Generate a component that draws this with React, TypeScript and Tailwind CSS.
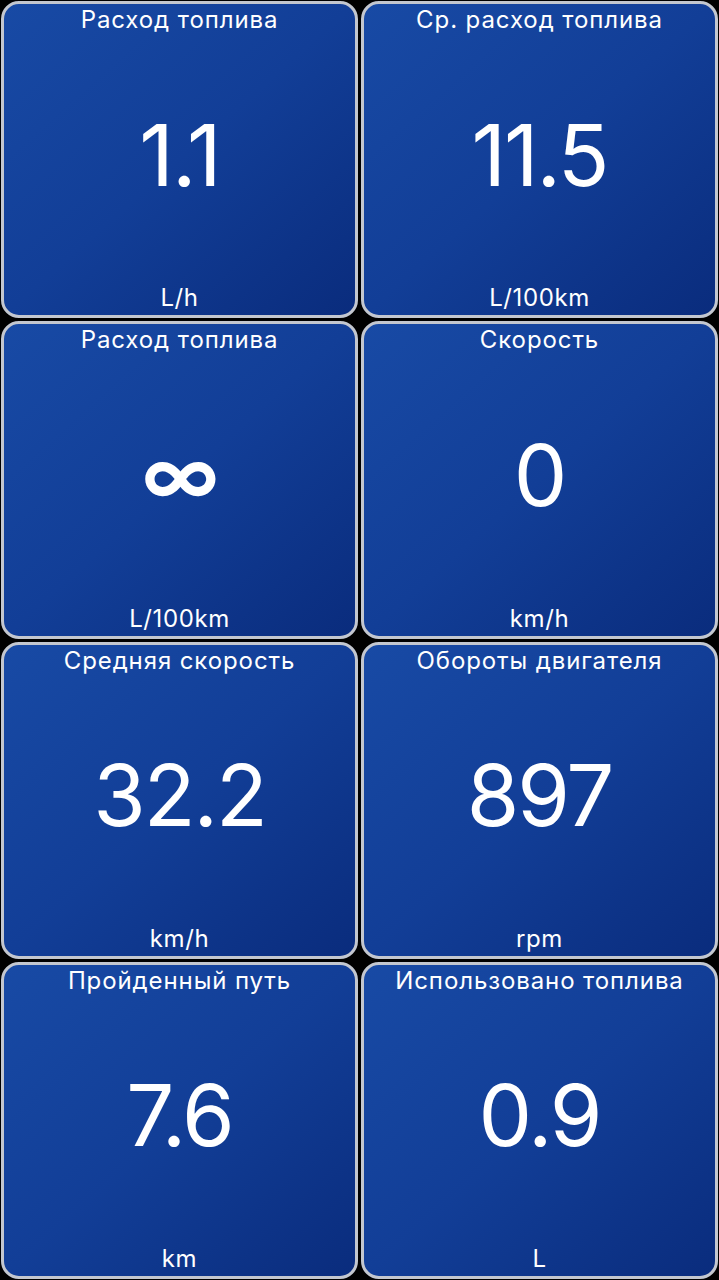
const tiles = [
  { title: 'Расход топлива', value: '1.1', unit: 'L/h' },
  { title: 'Ср. расход топлива', value: '11.5', unit: 'L/100km' },
  { title: 'Расход топлива', value: '∞', unit: 'L/100km' },
  { title: 'Скорость', value: '0', unit: 'km/h' },
  { title: 'Средняя скорость', value: '32.2', unit: 'km/h' },
  { title: 'Обороты двигателя', value: '897', unit: 'rpm' },
  { title: 'Пройденный путь', value: '7.6', unit: 'km' },
  { title: 'Использовано топлива', value: '0.9', unit: 'L' },
];

const Tile = ({ title, value, unit }: { title: string; value: string; unit: string }) => (
  <div className="flex flex-col items-center rounded-[18px] border-[3px] border-[#c3c7cf] bg-gradient-to-br from-[#184aa5] via-[#123e97] to-[#0a2c7d] text-white overflow-hidden">
    <div className="pt-[1px] text-[24px] leading-[30px] tracking-[0.9px] whitespace-nowrap">{title}</div>
    <div
      className={`flex flex-1 items-center justify-center leading-none -mt-[8px] tracking-[-2px] ${
        value === '∞' ? 'text-[80px] font-semibold' : 'text-[85px] font-normal'
      }`}
    >
      {value}
    </div>
    <div className="pb-[2px] text-[24px] leading-[30px] tracking-[0.6px]">{unit}</div>
  </div>
);

export default function App() {
  return (
    <div
      className="grid h-[1280px] w-[719px] grid-cols-2 grid-rows-4 gap-[3px] bg-black p-[1px]"
      style={{ fontFamily: 'Inter, "Noto Sans", sans-serif' }}
    >
      {tiles.map((t, i) => (
        <Tile key={i} {...t} />
      ))}
    </div>
  );
}
